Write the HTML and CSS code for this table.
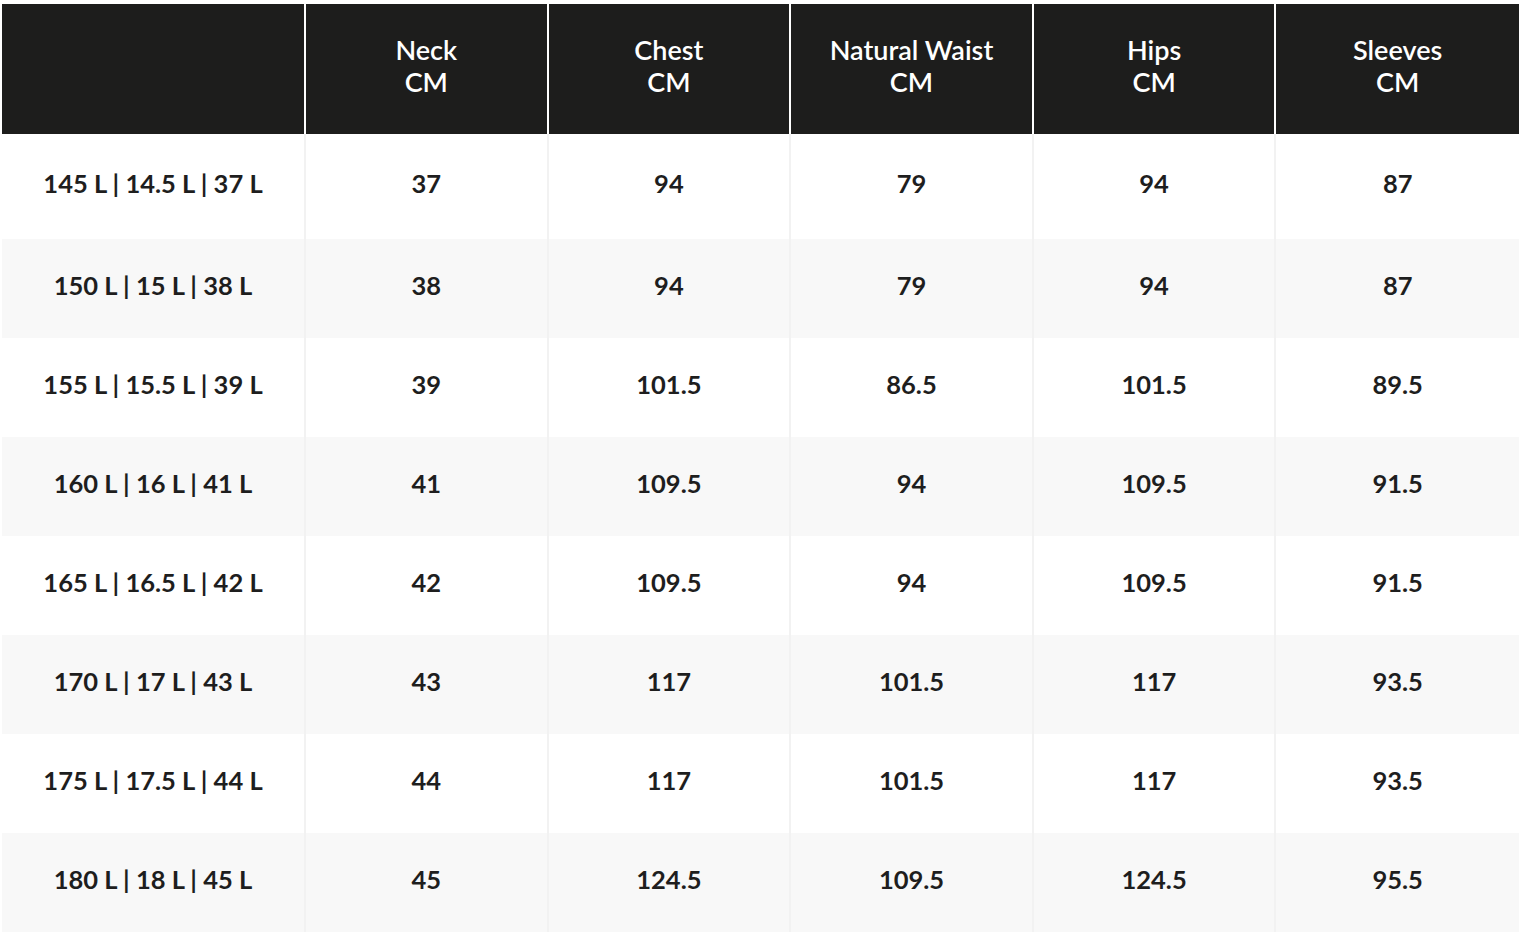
FILE: index.html
```html
<!DOCTYPE html>
<html>
<head>
<meta charset="utf-8">
<link rel="stylesheet" href="styles.css">
</head>
<body>
<table class="size-table">
  <colgroup>
    <col class="col-size">
    <col><col><col><col><col>
  </colgroup>
  <thead>
    <tr>
      <th></th>
      <th>Neck<br>CM</th>
      <th>Chest<br>CM</th>
      <th>Natural Waist<br>CM</th>
      <th>Hips<br>CM</th>
      <th>Sleeves<br>CM</th>
    </tr>
  </thead>
  <tbody>
    <tr class="first"><td>145 L | 14.5 L | 37 L</td><td>37</td><td>94</td><td>79</td><td>94</td><td>87</td></tr>
    <tr><td>150 L | 15 L | 38 L</td><td>38</td><td>94</td><td>79</td><td>94</td><td>87</td></tr>
    <tr><td>155 L | 15.5 L | 39 L</td><td>39</td><td>101.5</td><td>86.5</td><td>101.5</td><td>89.5</td></tr>
    <tr><td>160 L | 16 L | 41 L</td><td>41</td><td>109.5</td><td>94</td><td>109.5</td><td>91.5</td></tr>
    <tr><td>165 L | 16.5 L | 42 L</td><td>42</td><td>109.5</td><td>94</td><td>109.5</td><td>91.5</td></tr>
    <tr><td>170 L | 17 L | 43 L</td><td>43</td><td>117</td><td>101.5</td><td>117</td><td>93.5</td></tr>
    <tr><td>175 L | 17.5 L | 44 L</td><td>44</td><td>117</td><td>101.5</td><td>117</td><td>93.5</td></tr>
    <tr><td>180 L | 18 L | 45 L</td><td>45</td><td>124.5</td><td>109.5</td><td>124.5</td><td>95.5</td></tr>
  </tbody>
</table>
</body>
</html>
```

FILE: styles.css
```css
html, body {
  margin: 0;
  padding: 0;
  background: #ffffff;
}

body {
  padding: 4px 0 0 2px;
  font-family: Lato, "Open Sans", sans-serif;
}

.size-table {
  width: 1517px;
  table-layout: fixed;
  border-collapse: separate;
  border-spacing: 0;
}

.col-size {
  width: 304px;
}

.size-table thead tr {
  height: 130px;
}

.size-table th {
  background: #1d1d1c;
  color: #ffffff;
  font-size: 27px;
  font-weight: 600;
  line-height: 32px;
  padding: 0 0 6px 0;
  text-align: center;
  vertical-align: middle;
  border-right: 2px solid #ffffff;
}

.size-table th:last-child,
.size-table td:last-child {
  border-right: none;
}

.size-table tbody tr {
  height: 99px;
}

.size-table tbody tr.first {
  height: 105px;
}

.size-table td {
  color: #1e1e1e;
  font-size: 25.5px;
  font-weight: 700;
  line-height: 32px;
  padding: 0 0 8px 0;
  text-align: center;
  vertical-align: middle;
  border-right: 2px solid #f2f2f2;
}

.size-table tbody tr:nth-child(even) td {
  background: #f8f8f8;
}
```
